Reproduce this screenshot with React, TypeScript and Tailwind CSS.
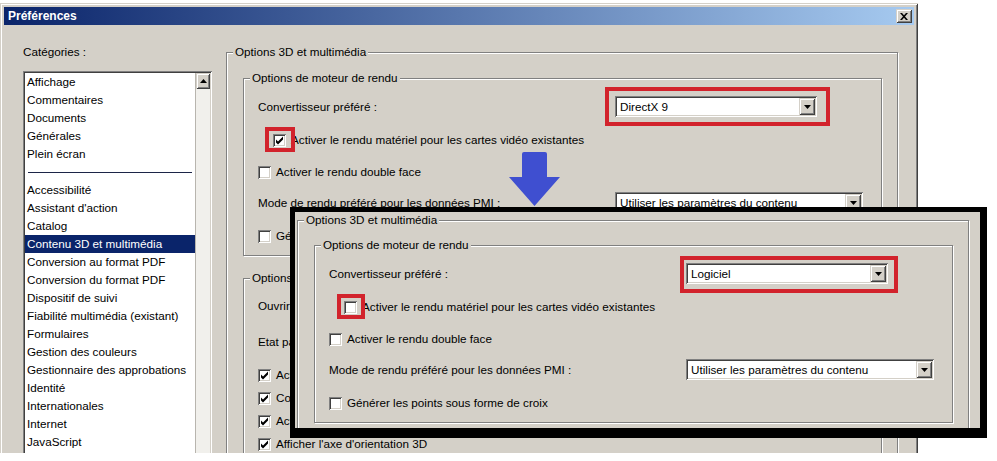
import React from "react";

const SUNKEN =
  "shadow-[inset_1px_1px_0_#808080,inset_-1px_-1px_0_#ffffff,inset_2px_2px_0_#404040,inset_-2px_-2px_0_#d4d0c8]";
const RAISED =
  "shadow-[inset_1px_1px_0_#d4d0c8,inset_-1px_-1px_0_#404040,inset_2px_2px_0_#ffffff,inset_-2px_-2px_0_#808080]";
const ETCH = "shadow-[inset_1px_1px_0_#ffffff,1px_1px_0_#ffffff]";

function Check({ checked = false }: { checked?: boolean }) {
  return (
    <span className={`relative block h-[13px] w-[13px] shrink-0 bg-white ${SUNKEN}`}>
      {checked && (
        <svg className="absolute left-0 top-0" width="13" height="13" viewBox="0 0 13 13">
          <path d="M3 5.5 L5 7.5 L10 2.5 L10 5.5 L5 10.5 L3 8.5 Z" fill="#000" />
        </svg>
      )}
    </span>
  );
}

function Select({ value, className }: { value: string; className: string }) {
  return (
    <div className={`flex h-[21px] items-center bg-white pl-[5px] ${SUNKEN} ${className}`}>
      <span className="flex-1 truncate">{value}</span>
      <span className={`mr-[2px] flex h-[17px] w-[16px] items-center justify-center bg-[#d4d0c8] ${RAISED}`}>
        <svg width="7" height="4" viewBox="0 0 7 4">
          <path d="M0 0H7L3.5 4Z" fill="#000" />
        </svg>
      </span>
    </div>
  );
}

function Hl({ children, cls }: { children: React.ReactNode; cls: string }) {
  return (
    <div className="relative">
      {children}
      <span className={`pointer-events-none absolute border-[4px] border-[#d2232c] ${cls}`} />
    </div>
  );
}

function CheckRow({
  label,
  checked = false,
  className = "",
}: {
  label: string;
  checked?: boolean;
  className?: string;
}) {
  return (
    <div className={`flex items-center whitespace-nowrap ${className}`}>
      <Check checked={checked} />
      <span className="ml-[5px]">{label}</span>
    </div>
  );
}

function Panel({
  renderer,
  hw,
  selHl,
  cbHl,
  innerTop,
  showTools,
}: {
  renderer: string;
  hw: boolean;
  selHl: string;
  cbHl: string;
  innerTop: string;
  showTools: boolean;
}) {
  return (
    <fieldset className={`m-0 w-[672px] min-w-0 border border-[#808080] p-0 ${ETCH}`}>
      <legend className="ml-[6px] bg-[#d4d0c8] px-[2px] leading-[14px]">Options 3D et multimédia</legend>
      <div className={`pl-[16px] pr-[15px] ${innerTop} ${showTools ? "" : "pb-[40px]"}`}>
        <fieldset className={`m-0 min-w-0 border border-[#808080] p-0 ${ETCH}`}>
          <legend className="ml-[6px] bg-[#d4d0c8] px-[2px] leading-[14px]">Options de moteur de rendu</legend>
          <div className="flex flex-col whitespace-nowrap pb-[12px] pl-[14px] pt-[11px]">
            <div className="flex h-[21px] items-center">
              <span className="w-[357px]">Convertisseur préféré :</span>
              <Hl cls={selHl}>
                <Select value={renderer} className="w-[202px]" />
              </Hl>
            </div>
            <div className="mt-[16px] flex items-center pl-[15px]">
              <Hl cls={cbHl}>
                <Check checked={hw} />
              </Hl>
              <span className="ml-[5px]">Activer le rendu matériel pour les cartes vidéo existantes</span>
            </div>
            <CheckRow className="mt-[18px]" label="Activer le rendu double face" />
            <div className="mt-[13px] flex h-[21px] items-center">
              <span className="w-[357px]">Mode de rendu préféré pour les données PMI :</span>
              <Select value="Utiliser les paramètres du contenu" className="w-[248px]" />
            </div>
            <CheckRow className="mt-[16px]" label="Générer les points sous forme de croix" />
          </div>
        </fieldset>
        {showTools && (
          <fieldset className={`m-0 mt-[15px] min-w-0 border border-[#808080] p-0 ${ETCH}`}>
            <legend className="ml-[6px] bg-[#d4d0c8] px-[2px] leading-[14px]">Options de l'outil 3D</legend>
            <div className="flex flex-col whitespace-nowrap pb-[12px] pl-[14px] pt-[10px]">
              <div className="flex h-[21px] items-center">
                <span className="w-[357px]">Ouvrir l'arborescence du modèle à l'activation :</span>
                <Select value="Utiliser les paramètres du contenu" className="w-[248px]" />
              </div>
              <div className="mt-[15px] flex h-[21px] items-center">
                <span className="w-[357px]">Etat par défaut de la barre d'outils :</span>
                <Select value="Utiliser les paramètres du contenu" className="w-[248px]" />
              </div>
              <CheckRow className="mt-[16px]" checked label="Activer la sélection pour l'outil Main" />
              <CheckRow className="mt-[9px]" checked label="Consolider les outils" />
              <CheckRow className="mt-[9px]" checked label="Activer la rotation du modèle" />
              <CheckRow className="mt-[9px]" checked label="Afficher l'axe d'orientation 3D" />
            </div>
          </fieldset>
        )}
      </div>
    </fieldset>
  );
}

const TOP_ITEMS = ["Affichage", "Commentaires", "Documents", "Générales", "Plein écran"];
const ITEMS = [
  "Accessibilité",
  "Assistant d'action",
  "Catalog",
  "Contenu 3D et multimédia",
  "Conversion au format PDF",
  "Conversion du format PDF",
  "Dispositif de suivi",
  "Fiabilité multimédia (existant)",
  "Formulaires",
  "Gestion des couleurs",
  "Gestionnaire des approbations",
  "Identité",
  "Internationales",
  "Internet",
  "JavaScript",
];

function Item({ label }: { label: string }) {
  const sel = label === "Contenu 3D et multimédia";
  return (
    <div
      className={`h-[18px] whitespace-nowrap pl-[2px] leading-[18px] ${sel ? "bg-[#0a246a] text-white" : ""}`}
    >
      {label}
    </div>
  );
}

export default function App() {
  return (
    <div className="relative h-[461px] w-[997px] overflow-hidden bg-white font-['Liberation_Sans',Arial,sans-serif] text-[11.7px] leading-[14px] text-black">
      <div className="mt-[3px] flex h-[450px] w-[918px] flex-col overflow-hidden bg-[#d4d0c8] px-[4px] pt-[4px] shadow-[inset_1px_1px_0_#d4d0c8,inset_-1px_0_0_#404040,inset_2px_2px_0_#ffffff,inset_-2px_0_0_#808080]">
        <div className="flex h-[18px] shrink-0 items-center justify-between bg-[linear-gradient(to_right,#0a246a,#a6caf0)] pl-[4px] pr-[2px]">
          <span className="text-[12px] font-bold text-white">Préférences</span>
          <span className={`flex h-[14px] w-[16px] items-center justify-center bg-[#d4d0c8] ${RAISED}`}>
            <svg width="8" height="7" viewBox="0 0 8 7">
              <path d="M0 0h2l2 2.2L6 0h2L5 3.5 8 7H6L4 4.8 2 7H0l3-3.5Z" fill="#000" />
            </svg>
          </span>
        </div>
        <div className="flex flex-1 pl-[19px] pt-[20px]">
          <div className="flex w-[189px] shrink-0 flex-col">
            <div className="leading-[14px]">Catégories :</div>
            <div className={`mt-[12px] flex h-[420px] bg-white p-[2px] ${SUNKEN}`}>
              <div className="flex-1 overflow-hidden">
                {TOP_ITEMS.map((t) => (
                  <Item key={t} label={t} />
                ))}
                <div className="flex h-[18px] items-center px-[3px]">
                  <div className="h-[1px] w-full bg-[#1c2548]" />
                </div>
                {ITEMS.map((t) => (
                  <Item key={t} label={t} />
                ))}
              </div>
              <div className="flex w-[15px] flex-col border-l border-[#b8b5ae] bg-[#f1f0ec]">
                <div className={`flex h-[16px] items-center justify-center bg-[#d4d0c8] ${RAISED}`}>
                  <svg width="7" height="4" viewBox="0 0 7 4">
                    <path d="M3.5 0L7 4H0Z" fill="#000" />
                  </svg>
                </div>
              </div>
            </div>
          </div>
          <div className="ml-[14px]">
            <Panel
              renderer="DirectX 9"
              hw
              selHl="-left-[10px] -top-[9px] -right-[13px] -bottom-[9px]"
              cbHl="-left-[8px] -top-[7px] -right-[9px] -bottom-[5px]"
              innerTop="pt-[12px]"
              showTools
            />
          </div>
        </div>
      </div>

      <svg className="absolute left-[509px] top-[152px]" width="51" height="54" viewBox="0 0 51 54">
        <path d="M15 0 H36 Q38 0 38 2 V25 H51 L25.5 54 L0 25 H13 V2 Q13 0 15 0 Z" fill="#3f4fd0" />
      </svg>

      <div className="absolute left-[290px] top-[207px] h-[231px] w-[697px] overflow-hidden border-b-[10px] border-l-[5px] border-r-[7px] border-t-[5px] border-black bg-[#d4d0c8] pl-[2px] pt-[1px]">
        <Panel
          renderer="Logiciel"
          hw={false}
          selHl="-left-[6px] -top-[7px] -right-[10px] -bottom-[9px]"
          cbHl="-left-[7px] -top-[7px] -right-[8px] -bottom-[5px]"
          innerTop="pt-[11px]"
          showTools={false}
        />
      </div>
    </div>
  );
}
